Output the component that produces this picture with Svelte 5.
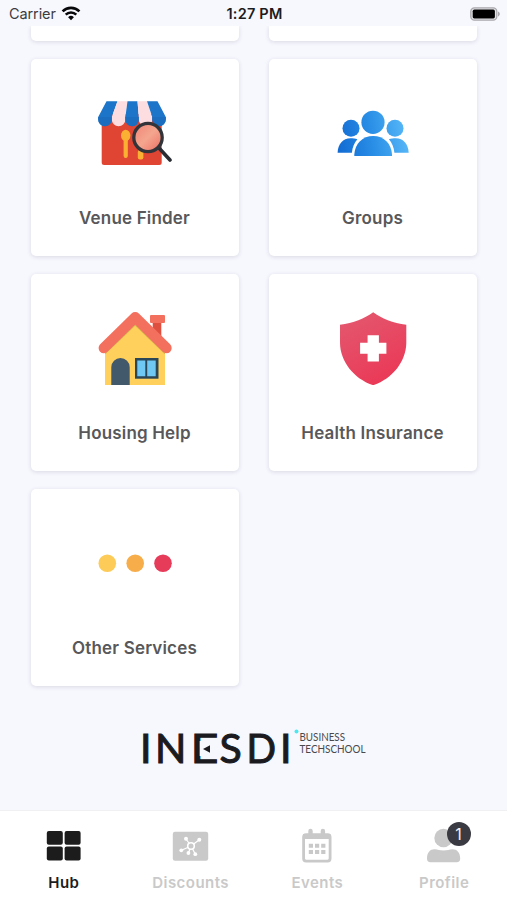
<script lang="ts">
  interface Service {
    id: string;
    label: string;
  }

  interface Tab {
    id: string;
    label: string;
    badge?: number;
  }

  const services: Service[] = [
    { id: 'venue', label: 'Venue Finder' },
    { id: 'groups', label: 'Groups' },
    { id: 'housing', label: 'Housing Help' },
    { id: 'health', label: 'Health Insurance' },
    { id: 'other', label: 'Other Services' }
  ];

  const tabs: Tab[] = [
    { id: 'hub', label: 'Hub' },
    { id: 'discounts', label: 'Discounts' },
    { id: 'events', label: 'Events' },
    { id: 'profile', label: 'Profile', badge: 1 }
  ];

  let active = $state('hub');
</script>

<div class="screen">
  <header class="status-bar">
    <div class="carrier">
      <span>Carrier</span>
      <svg width="20" height="15" viewBox="0 0 20 15" fill="none" stroke="#08080a">
        <path d="M1.6 5.4a12 12 0 0 1 16.8 0" stroke-width="2.7" />
        <path d="M4.7 8.6a7.5 7.5 0 0 1 10.6 0" stroke-width="2.5" />
        <path d="M10 14.3l-2.9-3a4.1 4.1 0 0 1 5.8 0z" fill="#08080a" stroke="none" />
      </svg>
    </div>
    <span class="time">1:27 PM</span>
    <svg class="battery" width="30" height="14" viewBox="0 0 30 14">
      <rect x="0.8" y="0.8" width="26" height="12.4" rx="3.6" fill="#e4e4e8" stroke="#a9a9ad" stroke-width="1.3" />
      <rect x="2.7" y="2.6" width="22.2" height="8.8" rx="1.6" fill="#000" />
      <path d="M28 4.6c2.4 1 2.4 3.8 0 4.8z" fill="#a9a9ad" />
    </svg>
  </header>

  <main class="content">
    <div class="grid">
      <div class="card clipped"></div>
      <div class="card clipped"></div>
      {#each services as service}
        <div class="card">
          <svg class="card-icon" width="74" height="74" viewBox="0 0 74 74">
            {#if service.id === 'venue'}
              <path d="M3.7 18h60v48.500a2.500 2.500 0 0 1-2.500 2.500h-55a2.500 2.500 0 0 1-2.500-2.500z" fill="#e04433" />
              <path d="M8.500 5.300h11L13.800 21v2.500a6.800 6.800 0 0 1-13.600 0V21z" fill="#1c75c8" />
              <path d="M19.500 5.300h10L27.400 21v2.500a6.800 6.800 0 0 1-13.600 0V21z" fill="#fddde0" />
              <path d="M29.500 5.300h10L40.800 21v2.500a6.700 6.700 0 0 1-13.400 0V21z" fill="#1c75c8" />
              <path d="M39.500 5.300h9.500L54.300 21v2.500a6.750 6.750 0 0 1-13.500 0V21z" fill="#fddde0" />
              <path d="M49 5.300h10.500L67.800 21v2.500a6.750 6.750 0 0 1-13.500 0V21z" fill="#1c75c8" />
              <path d="M.2 21h13.600v2.500a6.800 6.800 0 0 1-13.600 0zM27.400 21h13.400v2.500a6.700 6.700 0 0 1-13.400 0zM54.300 21h13.500v2.500a6.750 6.750 0 0 1-13.500 0z" fill="#1a6dbf" />
              <ellipse cx="27.700" cy="39.500" rx="4.700" ry="5.700" fill="#fbb034" />
              <rect x="25.600" y="42" width="4.200" height="20" rx="2" fill="#fbb034" />
              <rect x="39.800" y="54" width="5.600" height="9.500" rx="2" fill="#fbb034" />
              <path d="M60.500 51.500L72 64" stroke="#292c33" stroke-width="3.600" stroke-linecap="round" />
              <circle cx="50" cy="41.500" r="14.200" fill="url(#lens)" stroke="#33343a" stroke-width="3.300" />
              <defs>
                <linearGradient id="lens" x1="0" y1="0" x2="1" y2="1">
                  <stop offset="0" stop-color="#f08375" />
                  <stop offset="0.5" stop-color="#f4a68f" />
                  <stop offset="1" stop-color="#ec6c60" />
                </linearGradient>
              </defs>
            {:else if service.id === 'groups'}
              <g fill="url(#people)">
                <circle cx="37" cy="26.300" r="11.600" />
                <circle cx="15" cy="32.300" r="8.500" />
                <circle cx="59" cy="32.300" r="8.500" />
                <path d="M18.300 60v-1.500C19 47.500 26.500 40 37.200 40S55.400 47.500 56 58.500V60z" />
                <path d="M1.600 56.700C2 48 7 42.300 14.500 42.300c2.500 0 4.800.2 6.900 1-3 3.500-5 8-5.500 13.400z" />
                <path d="M72.700 56.700C72.300 48 67.300 42.300 59.800 42.300c-2.500 0-4.800.2-6.900 1 3 3.500 5 8 5.500 13.400z" />
              </g>
              <defs>
                <linearGradient id="people" gradientUnits="userSpaceOnUse" x1="2" y1="50" x2="72" y2="38">
                  <stop offset="0" stop-color="#126bd3" />
                  <stop offset="0.5" stop-color="#2a8fe6" />
                  <stop offset="1" stop-color="#58b8f8" />
                </linearGradient>
              </defs>
            {:else if service.id === 'housing'}
              <rect x="54.700" y="10" width="8.600" height="22" fill="#df4f3f" />
              <rect x="52" y="4" width="15" height="8" rx="1" fill="#f4705e" />
              <path d="M7 36.500L37.200 8 67 36.500V74H7z" fill="#ffd05b" />
              <path d="M7 42.500L37.200 13.800 67 42.500" fill="none" stroke="#d4b650" stroke-width="1.500" />
              <path d="M5.800 37L37.200 6.300 68.500 37" fill="none" stroke="#f4705e" stroke-width="10.400" stroke-linecap="round" stroke-linejoin="round" />
              <path d="M13.300 74V56.200a9.200 9.200 0 0 1 18.400 0V74z" fill="#41596b" />
              <rect x="37" y="47" width="23.500" height="20.700" fill="#2b4656" />
              <path d="M39.300 49.500h8v15.700h-8zM49.200 49.500h8.500v15.700h-8.500z" fill="#6fc8f4" />
            {:else if service.id === 'health'}
              <path d="M37.200 1.200C45.500 7.500 57 12 70.300 13.800V32C70 51 56 68 37.200 74.200 18.400 68 4.300 51 4 32V13.800C17.300 12 28.800 7.500 37.200 1.200z" fill="url(#shield)" />
              <path d="M31.600 24.300h11.300v7.500h7.500v11h-7.500v7.700H31.600v-7.700h-7.500v-11h7.500z" fill="#fff" />
              <defs>
                <linearGradient id="shield" x1="0" y1="0" x2="0.5" y2="1">
                  <stop offset="0" stop-color="#e35a70" />
                  <stop offset="1" stop-color="#ea3a58" />
                </linearGradient>
              </defs>
            {:else}
              <circle cx="9.300" cy="37.300" r="8.800" fill="#fccb58" />
              <circle cx="37.200" cy="37.300" r="8.800" fill="#f7ad4a" />
              <circle cx="65" cy="37.300" r="8.800" fill="#e73b5a" />
            {/if}
          </svg>
          <span class="card-label">{service.label}</span>
        </div>
      {/each}
    </div>

    <svg class="brand" width="250" height="64" viewBox="-10 -10 250 64">
      <g class="brand-name">
        <text x="-2" y="36.300">I</text>
        <text x="13" y="36.300">N</text>
        <text x="48.500" y="36.300" textLength="28" lengthAdjust="spacingAndGlyphs">E</text>
        <text x="77.500" y="36.300">S</text>
        <text x="104.500" y="36.300" textLength="29.500" lengthAdjust="spacingAndGlyphs">D</text>
        <text x="138" y="36.300">I</text>
      </g>
      <!-- the middle bar of the E is swapped for an arrow -->
      <rect x="57.700" y="14" width="17" height="15" fill="#f7f8fe" />
      <path d="M61 22l7-3.700v7.400z" fill="#1b1b1f" />
      <circle cx="154.500" cy="4.500" r="2" fill="#4be9ef" />
      <g class="brand-tag">
        <text x="157.500" y="14.300" textLength="45.500" lengthAdjust="spacingAndGlyphs">BUSINESS</text>
        <text x="157.500" y="26" textLength="66" lengthAdjust="spacingAndGlyphs">TECHSCHOOL</text>
      </g>
    </svg>
  </main>

  <nav class="tab-bar">
    {#each tabs as tab}
      <button class="tab" class:active={active === tab.id} onclick={() => (active = tab.id)}>
        <span class="tab-icon">
          <svg width="36" height="36" viewBox="0 0 36 36" fill="currentColor">
            {#if tab.id === 'hub'}
              <rect x="1.800" y="3" width="16" height="13.800" rx="2" />
              <rect x="19.600" y="3" width="16" height="13.800" rx="2" />
              <rect x="1.800" y="18.600" width="16" height="13.800" rx="2" />
              <rect x="19.600" y="18.600" width="16" height="13.800" rx="2" />
            {:else if tab.id === 'discounts'}
              <rect x="0.800" y="3.800" width="35.400" height="29" rx="2.200" />
              <g stroke="#fff" stroke-width="1.200">
                <path d="M19 18L14 11M19 18l8-6M19 18L9.500 22.200M19 18l-2.500 7M19 18l4.200 8" />
                <circle cx="19" cy="18" r="3.300" fill="currentColor" stroke-width="1.600" />
              </g>
              <g fill="#fff">
                <circle cx="14" cy="10.800" r="2" />
                <circle cx="27.300" cy="11.800" r="2" />
                <circle cx="9.300" cy="22.300" r="1.900" />
                <circle cx="16.400" cy="25" r="1.900" />
                <circle cx="23.300" cy="26.200" r="1.900" />
              </g>
            {:else if tab.id === 'events'}
              <rect x="4.600" y="6.600" width="26.500" height="26.500" rx="2.500" fill="none" stroke="currentColor" stroke-width="2.800" />
              <path d="M4 6h27.500v5H4zM9.300 3a2.200 2.200 0 0 1 4.400 0v4H9.300zM21.700 3a2.200 2.200 0 0 1 4.400 0v4h-4.400z" />
              <path d="M9.800 15.800h4.200v4h-4.200zM16 15.800h4.200v4H16zM22.200 15.800h4.200v4h-4.200zM9.800 22h4.200v4h-4.200zM16 22h4.200v4H16zM22.200 22h4.200v4h-4.200z" />
            {:else}
              <circle cx="17.500" cy="10" r="9.200" />
              <path d="M1 30.500c0-6 3-9.300 7.500-9.300 3.500 0 5 1.300 9 1.300s5.500-1.300 9-1.300c4.500 0 7.700 3.300 7.700 9.300 0 2.500-1.200 3.800-3.500 3.800H4.500C2.200 34.300 1 33 1 30.500z" />
            {/if}
          </svg>
          {#if tab.badge}
            <span class="badge">{tab.badge}</span>
          {/if}
        </span>
        <span class="tab-label">{tab.label}</span>
      </button>
    {/each}
  </nav>
</div>

<style>
  :global(body) {
    margin: 0;
    background: #f7f8fe;
  }

  .screen {
    display: flex;
    flex-direction: column;
    width: 507px;
    height: 900px;
    overflow: hidden;
    background: #f7f8fe;
    font-family: Inter, "Liberation Sans", sans-serif;
  }

  .status-bar {
    display: grid;
    grid-template-columns: 1fr auto 1fr;
    align-items: center;
    flex: none;
    box-sizing: border-box;
    height: 26px;
    padding: 1px 7px 0 9px;
    font-size: 14.5px;
    line-height: 24px;
    color: #3c3c40;
  }

  .carrier {
    display: flex;
    align-items: center;
    gap: 5px;
  }

  .carrier span {
    letter-spacing: -0.1px;
  }

  .time {
    font-weight: 600;
    letter-spacing: 0.2px;
    color: #1c1c20;
  }

  .battery {
    justify-self: end;
  }

  .content {
    display: flex;
    flex-direction: column;
    align-items: center;
    flex: 1;
    min-height: 0;
    overflow: hidden;
  }

  .grid {
    display: grid;
    grid-template-columns: 208px 208px;
    grid-template-rows: 15.3px;
    grid-auto-rows: 197px;
    gap: 18px 30px;
    flex: none;
  }

  .card {
    display: flex;
    flex-direction: column;
    align-items: center;
    box-sizing: border-box;
    padding-top: 37px;
    background: #fff;
    border-radius: 5px;
    box-shadow: 0 1px 4px rgba(40, 40, 70, 0.15);
  }

  .card.clipped {
    padding: 0;
    border-radius: 0 0 5px 5px;
  }

  .card-label {
    margin-top: 35.7px;
    font-size: 17px;
    font-weight: 600;
    line-height: 24px;
    letter-spacing: 0.17px;
    color: #58585a;
  }

  .brand {
    flex: none;
    margin: 31px 0 0 6px;
  }

  .brand-name {
    font-family: Lato, sans-serif;
    font-size: 41px;
    font-weight: 400;
    fill: #1b1b1f;
    stroke: #1b1b1f;
    stroke-width: 1.1px;
  }

  .brand-tag {
    font-family: Lato, sans-serif;
    font-size: 10.8px;
    fill: #48484e;
  }

  .tab-bar {
    display: grid;
    grid-template-columns: repeat(4, 1fr);
    flex: none;
    box-sizing: border-box;
    height: 90px;
    border-top: 1px solid #f0f0f3;
    background: #fff;
  }

  .tab {
    display: flex;
    flex-direction: column;
    align-items: center;
    padding: 17px 0 0;
    border: 0;
    background: none;
    font-family: inherit;
    color: #c9c9c9;
  }

  .tab.active {
    color: #1c1c1c;
  }

  .tab-icon {
    position: relative;
    height: 36px;
  }

  .tab-icon svg {
    display: block;
    overflow: visible;
  }

  .badge {
    position: absolute;
    top: -6px;
    right: -9px;
    width: 24px;
    height: 24px;
    border-radius: 50%;
    background: #3a3a43;
    color: #f0f0f4;
    font-size: 16px;
    line-height: 24px;
    text-align: center;
  }

  .tab-label {
    margin-top: 9px;
    padding-left: 1px;
    font-size: 15px;
    font-weight: 600;
    line-height: 20px;
    letter-spacing: 0.45px;
  }
</style>
